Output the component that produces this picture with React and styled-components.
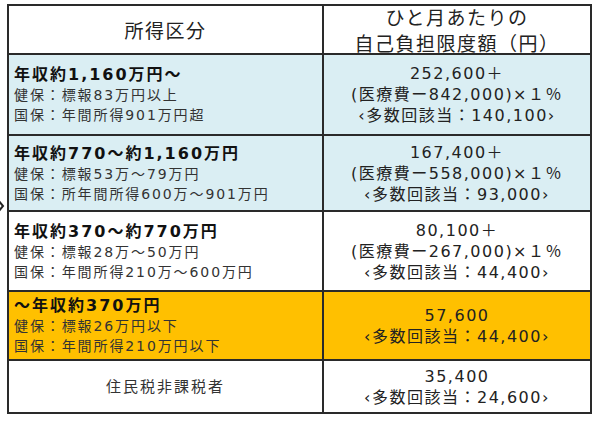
import React from "react";
import styled, { createGlobalStyle } from "styled-components";

const GlobalStyle = createGlobalStyle`
  body {
    margin: 0;
    background: #ffffff;
    font-family: "DejaVu Sans", "Noto Sans CJK JP", sans-serif;
    color: #222;
  }
`;

const Page = styled.div`
  position: relative;
  width: 600px;
  height: 422px;
  padding: 4px 0 0 7px;
  box-sizing: border-box;
`;

const Grid = styled.div`
  display: grid;
  grid-template-columns: 313px 266px;
  grid-template-rows: 47px 79px 74px 78px 67px 51px;
  gap: 2px;
  padding: 2px;
  width: 585px;
  box-sizing: border-box;
  background: #2a2a2a;
`;

const Cell = styled.div`
  background: ${(p) => p.$bg || "#ffffff"};
  display: flex;
  flex-direction: column;
  justify-content: center;
  align-items: ${(p) => (p.$center ? "center" : "flex-start")};
  text-align: ${(p) => (p.$center ? "center" : "left")};
  padding: ${(p) => (p.$center ? "0" : "0 0 0 5px")};
  box-sizing: border-box;
  white-space: nowrap;
`;

const HeadText = styled.div`
  font-family: "Noto Sans CJK JP", sans-serif;
  font-size: 19px;
  line-height: 26px;
  letter-spacing: 1.5px;
  color: #222;
`;

const Title = styled.div`
  font-size: 16px;
  font-weight: 700;
  line-height: 21px;
  letter-spacing: 2px;
  color: #111;
`;

const Sub = styled.div`
  font-size: ${(p) => (p.$big ? "15px" : "14px")};
  line-height: 20px;
  letter-spacing: ${(p) => (p.$big ? "2px" : "1.9px")};
  color: #333;
`;

const Amount = styled.div`
  font-size: 16px;
  line-height: 21px;
  letter-spacing: 1.5px;
  color: #222;
`;

const Arrow = styled.svg`
  position: absolute;
  left: -3px;
  top: 198px;
`;

const BLUE = "#daeef3";
const ORANGE = "#ffc000";

const rows = [
  {
    bg: BLUE,
    title: "年収約1,160万円～",
    kenpo: "健保：標報83万円以上",
    kokuho: "国保：年間所得901万円超",
    amounts: ["252,600＋", "(医療費ー842,000)×１％", "‹多数回該当：140,100›"],
  },
  {
    bg: BLUE,
    title: "年収約770～約1,160万円",
    kenpo: "健保：標報53万～79万円",
    kokuho: "国保：所年間所得600万～901万円",
    amounts: ["167,400＋", "(医療費ー558,000)×１％", "‹多数回該当：93,000›"],
  },
  {
    bg: "#ffffff",
    title: "年収約370～約770万円",
    kenpo: "健保：標報28万～50万円",
    kokuho: "国保：年間所得210万～600万円",
    amounts: ["80,100＋", "(医療費ー267,000)×１％", "‹多数回該当：44,400›"],
  },
  {
    bg: ORANGE,
    title: "～年収約370万円",
    kenpo: "健保：標報26万円以下",
    kokuho: "国保：年間所得210万円以下",
    amounts: ["57,600", "‹多数回該当：44,400›"],
  },
];

const App = () => (
  <Page>
    <GlobalStyle />
    <Arrow width="8" height="16" viewBox="0 0 8 16">
      <path d="M1 2 L6 8 L1 14" fill="none" stroke="#222" strokeWidth="2" />
    </Arrow>
    <Grid>
      <Cell $center>
        <HeadText>所得区分</HeadText>
      </Cell>
      <Cell $center>
        <HeadText>ひと月あたりの</HeadText>
        <HeadText>自己負担限度額（円）</HeadText>
      </Cell>
      {rows.map((r) => (
        <React.Fragment key={r.title}>
          <Cell $bg={r.bg}>
            <Title>{r.title}</Title>
            <Sub>{r.kenpo}</Sub>
            <Sub>{r.kokuho}</Sub>
          </Cell>
          <Cell $bg={r.bg} $center>
            {r.amounts.map((a) => (
              <Amount key={a}>{a}</Amount>
            ))}
          </Cell>
        </React.Fragment>
      ))}
      <Cell $center>
        <Sub $big>住民税非課税者</Sub>
      </Cell>
      <Cell $center>
        <Amount>35,400</Amount>
        <Amount>‹多数回該当：24,600›</Amount>
      </Cell>
    </Grid>
  </Page>
);

export default App;
